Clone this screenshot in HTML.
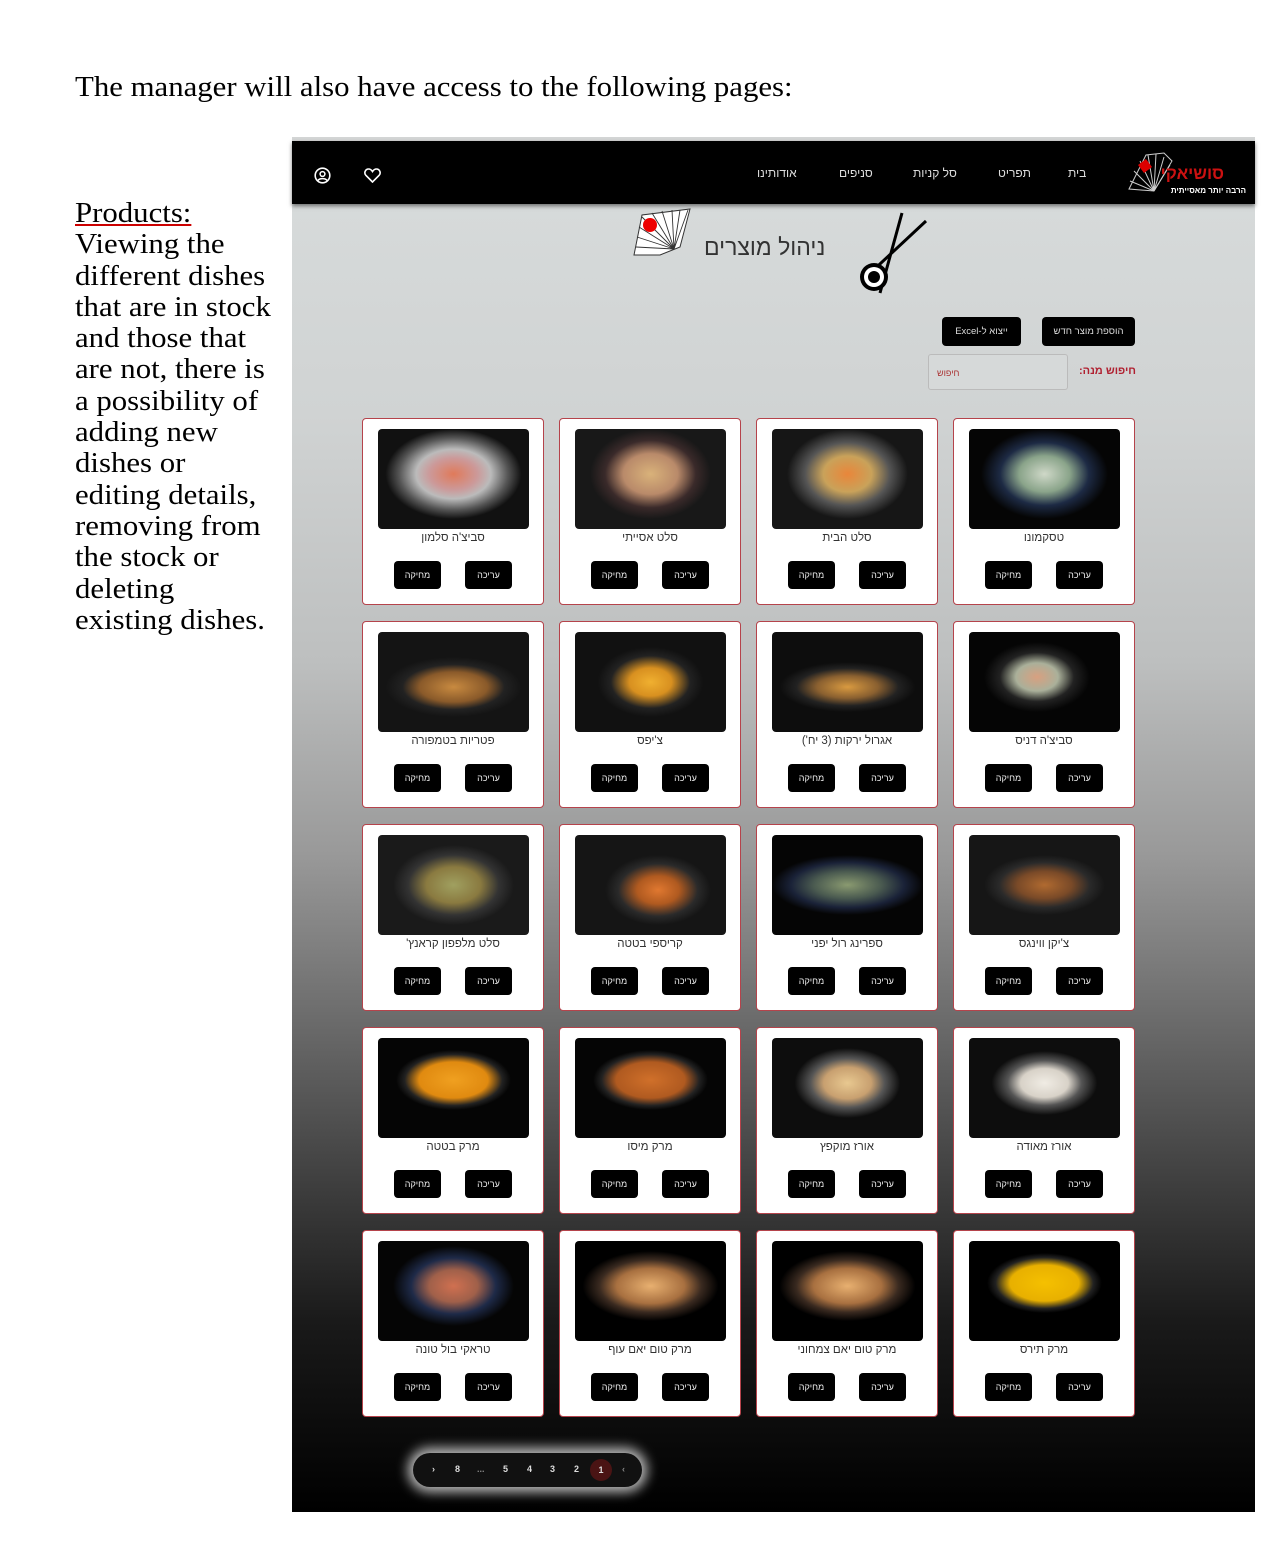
<!DOCTYPE html>
<html><head><meta charset="utf-8">
<style>
*{margin:0;padding:0;box-sizing:border-box}
body{width:1275px;height:1545px;background:#fff;position:relative;overflow:hidden;font-family:"Liberation Serif",serif}
.t{position:absolute;font-family:"Liberation Serif",serif;color:#000;transform:scaleX(1.1);transform-origin:0 0;white-space:nowrap}
#app{position:absolute;left:292px;top:137px;width:963px;height:1375px;background:linear-gradient(#d8dcdc 0%,#d0d3d3 20%,#bdbfbf 38%,#999 52%,#555 70%,#1a1a1a 86%,#000 100%);border-top:4px solid #d4d6d6}
#nav{position:absolute;left:0;top:0;width:963px;height:63px;background:#000;box-shadow:0 2px 4px rgba(0,0,0,.5)}
.nl{position:absolute;top:25px;color:#ddd;font:12px "Liberation Sans","Noto Sans CJK JP",sans-serif}
.card{position:absolute;width:182px;height:187px;background:#fff;border:1.5px solid #b5434b;border-radius:4px;direction:rtl}
.img{position:absolute;left:15px;top:10px;width:151px;height:100px;border-radius:4px;background:#111}
.nm{position:absolute;left:0;width:100%;top:113px;text-align:center;font:11.5px "Liberation Sans","Noto Sans CJK JP",sans-serif;color:#333}
.b{position:absolute;top:142px;width:47px;height:28px;background:#000;border-radius:4px;color:#eee;font:9px "Liberation Sans","Noto Sans CJK JP",sans-serif;text-align:center;line-height:28px}
.b1{left:31px}.b2{left:102px}
.btn{position:absolute;background:#000;border-radius:4px;color:#ddd;font:9.5px "Liberation Sans","Noto Sans CJK JP",sans-serif;text-align:center;line-height:29px;height:29px;direction:rtl}
</style></head><body>
<div class="t" style="left:75px;top:72px;font-size:28px;">The manager will also have access to the following pages:</div>
<div class="t" style="left:75px;top:198px;font-size:28px;line-height:31.3px;"><span style="text-decoration:underline;text-decoration-color:#c00">Products:</span><br>Viewing the<br>different dishes<br>that are in stock<br>and those that<br>are not, there is<br>a possibility of<br>adding new<br>dishes or<br>editing details,<br>removing from<br>the stock or<br>deleting<br>existing dishes.</div>

<div id="app">
<div id="nav">
 <svg style="position:absolute;left:22px;top:26px" width="17" height="17" viewBox="0 0 17 17"><circle cx="8.5" cy="8.5" r="7.3" fill="none" stroke="#fff" stroke-width="1.6"/><circle cx="8.5" cy="7" r="2.4" fill="none" stroke="#fff" stroke-width="1.5"/><path d="M4 13.5c1.5-2.5 7.5-2.5 9 0" fill="none" stroke="#fff" stroke-width="1.5"/></svg>
 <svg style="position:absolute;left:72px;top:27px" width="17" height="15" viewBox="0 0 17 15"><path d="M8.5 14L2 7.5C-.5 4.8 1.5 1 4.6 1 6.5 1 7.7 2.3 8.5 3.5 9.3 2.3 10.5 1 12.4 1 15.5 1 17.5 4.8 15 7.5Z" fill="none" stroke="#fff" stroke-width="1.6"/></svg>
 <span class="nl" style="left:465px">אודותינו</span>
 <span class="nl" style="left:547px">סניפים</span>
 <span class="nl" style="left:621px">סל קניות</span>
 <span class="nl" style="left:706px">תפריט</span>
 <span class="nl" style="left:776px">בית</span>
 <svg style="position:absolute;left:834px;top:10px" width="122" height="48" viewBox="0 0 122 48">
  <g stroke="#ccc" stroke-width="1" fill="none"><path d="M3 38L20 4 38 2 46 10 28 40Z"/><path d="M28 40L8 20M28 40L14 10M28 40L22 4M28 40L30 3M28 40L38 6M28 40L44 14M28 40L4 30"/></g>
  <path d="M12 14l8-6 6 8-8 6z" fill="#d00"/>
  <text x="98" y="28" text-anchor="end" font-family="Liberation Sans,Noto Sans CJK JP,sans-serif" font-size="17" font-weight="bold" fill="#c11">סושיאקי</text>
  <text x="120" y="42" text-anchor="end" font-family="Liberation Sans,Noto Sans CJK JP,sans-serif" font-size="8" font-weight="bold" fill="#fff">הרבה יותר מאסייתית</text>
 </svg>
</div>
<svg style="position:absolute;left:338px;top:66px" width="68" height="56" viewBox="0 0 68 56"><path d="M4 48L12 8 60 2 50 40 30 48Z" fill="#fff" stroke="#333" stroke-width="1"/><g stroke="#333" stroke-width=".9"><path d="M44 42L6 40M44 42L7 30M44 42L9 20M44 42L12 10M44 42L22 6M44 42L32 4M44 42L42 3M44 42L50 3M44 42L58 3"/></g><circle cx="20" cy="18" r="7" fill="#e00"/></svg>
<div style="position:absolute;left:412px;top:93px;font:23px 'Liberation Sans','Noto Sans CJK JP',sans-serif;color:#333;direction:rtl">ניהול מוצרים</div>
<svg style="position:absolute;left:560px;top:70px" width="80" height="84" viewBox="0 0 80 84"><path d="M50 2L28 82M74 10L14 66" stroke="#000" stroke-width="3"/><circle cx="22" cy="66" r="14" fill="#000"/><circle cx="22" cy="66" r="10" fill="#fff"/><circle cx="22" cy="66" r="6" fill="#000"/></svg>

<div class="btn" style="left:650px;top:176px;width:79px">ייצוא ל-Excel</div>
<div class="btn" style="left:750px;top:176px;width:93px">הוספת מוצר חדש</div>
<div style="position:absolute;left:636px;top:213px;width:140px;height:36px;border:1px solid #bbb;border-radius:3px;background:#d6d9d9;font:9px 'Liberation Sans','Noto Sans CJK JP',sans-serif;color:#a33;padding:13px 0 0 8px;text-align:left">חיפוש</div>
<div style="position:absolute;left:780px;top:224px;font:bold 11px 'Liberation Sans','Noto Sans CJK JP',sans-serif;color:#b02030;direction:rtl;width:64px;text-align:right">חיפוש מנה:</div>

<div style="position:absolute;left:121px;top:1312px;width:229px;height:34px;border-radius:17px;background:#111;box-shadow:0 0 12px 5px rgba(255,255,255,.75);font:bold 9px 'Liberation Sans',sans-serif;color:#ddd">
 <span style="position:absolute;left:19px;top:11px">›</span>
 <span style="position:absolute;left:42px;top:11px">8</span>
 <span style="position:absolute;left:64px;top:11px;color:#888">...</span>
 <span style="position:absolute;left:90px;top:11px">5</span>
 <span style="position:absolute;left:114px;top:11px">4</span>
 <span style="position:absolute;left:137px;top:11px">3</span>
 <span style="position:absolute;left:161px;top:11px">2</span>
 <span style="position:absolute;left:177px;top:6px;width:22px;height:22px;border-radius:50%;background:#4a1414;text-align:center;line-height:22px">1</span>
 <span style="position:absolute;left:209px;top:11px;color:#888">‹</span>
</div>
</div>

<div class="card" style="left:362px;top:418px"><div class="img" style="background:radial-gradient(ellipse 45% 45% at 50% 45%,#e07a5a 0,#c99 35%,#bbb 55%,#555 80%,#111 100%)"></div><div class="nm">סביצ'ה סלמון</div><div class="b b1">מחיקה</div><div class="b b2">עריכה</div></div>
<div class="card" style="left:559px;top:418px"><div class="img" style="background:radial-gradient(ellipse 40% 45% at 50% 45%,#d9b27a 0,#b98a6a 45%,#3a2a2a 75%,#181818 100%)"></div><div class="nm">סלט אסייתי</div><div class="b b1">מחיקה</div><div class="b b2">עריכה</div></div>
<div class="card" style="left:756px;top:418px"><div class="img" style="background:radial-gradient(ellipse 40% 45% at 50% 45%,#e9863a 0,#c9a25a 40%,#555 70%,#161616 100%)"></div><div class="nm">סלט הבית</div><div class="b b1">מחיקה</div><div class="b b2">עריכה</div></div>
<div class="card" style="left:953px;top:418px"><div class="img" style="background:radial-gradient(ellipse 42% 45% at 50% 45%,#cfd8c8 0,#8aa48a 40%,#1d2a44 70%,#050505 100%)"></div><div class="nm">טסקמונו</div><div class="b b1">מחיקה</div><div class="b b2">עריכה</div></div>
<div class="card" style="left:362px;top:621px"><div class="img" style="background:radial-gradient(ellipse 45% 30% at 50% 55%,#c88a40 0,#8a5a2a 50%,#222 75%,#141414 100%)"></div><div class="nm">פטריות בטמפורה</div><div class="b b1">מחיקה</div><div class="b b2">עריכה</div></div>
<div class="card" style="left:559px;top:621px"><div class="img" style="background:radial-gradient(ellipse 35% 35% at 50% 50%,#f0b030 0,#d89020 40%,#222 75%,#111 100%)"></div><div class="nm">צ'יפס</div><div class="b b1">מחיקה</div><div class="b b2">עריכה</div></div>
<div class="card" style="left:756px;top:621px"><div class="img" style="background:radial-gradient(ellipse 45% 25% at 50% 55%,#d99a40 0,#8a6030 45%,#222 75%,#0d0d0d 100%)"></div><div class="nm">אגרול ירקות (3 יח')</div><div class="b b1">מחיקה</div><div class="b b2">עריכה</div></div>
<div class="card" style="left:953px;top:621px"><div class="img" style="background:radial-gradient(ellipse 35% 35% at 45% 45%,#d8a080 0,#aab09a 40%,#222 70%,#050505 100%)"></div><div class="nm">סביצ'ה דניס</div><div class="b b1">מחיקה</div><div class="b b2">עריכה</div></div>
<div class="card" style="left:362px;top:824px"><div class="img" style="background:radial-gradient(ellipse 40% 40% at 50% 50%,#a0a060 0,#8a7a40 45%,#333 75%,#1a1a1a 100%)"></div><div class="nm">סלט מלפפון קראנץ'</div><div class="b b1">מחיקה</div><div class="b b2">עריכה</div></div>
<div class="card" style="left:559px;top:824px"><div class="img" style="background:radial-gradient(ellipse 35% 35% at 55% 55%,#e07830 0,#b05a20 40%,#2a2a2a 75%,#151515 100%)"></div><div class="nm">קריספי בטטה</div><div class="b b1">מחיקה</div><div class="b b2">עריכה</div></div>
<div class="card" style="left:756px;top:824px"><div class="img" style="background:radial-gradient(ellipse 50% 30% at 50% 50%,#8a9a70 0,#4a5a50 45%,#1a2238 75%,#050505 100%)"></div><div class="nm">ספרינג רול יפני</div><div class="b b1">מחיקה</div><div class="b b2">עריכה</div></div>
<div class="card" style="left:953px;top:824px"><div class="img" style="background:radial-gradient(ellipse 40% 30% at 50% 50%,#b06a30 0,#7a4a28 45%,#2a2a2a 75%,#161616 100%)"></div><div class="nm">צ'יקן ווינגס</div><div class="b b1">מחיקה</div><div class="b b2">עריכה</div></div>
<div class="card" style="left:362px;top:1027px"><div class="img" style="background:radial-gradient(ellipse 38% 30% at 50% 42%,#f0a020 0,#e08a10 60%,#222 85%,#050505 100%)"></div><div class="nm">מרק בטטה</div><div class="b b1">מחיקה</div><div class="b b2">עריכה</div></div>
<div class="card" style="left:559px;top:1027px"><div class="img" style="background:radial-gradient(ellipse 38% 30% at 50% 42%,#d0702a 0,#b05a20 60%,#222 85%,#050505 100%)"></div><div class="nm">מרק מיסו</div><div class="b b1">מחיקה</div><div class="b b2">עריכה</div></div>
<div class="card" style="left:756px;top:1027px"><div class="img" style="background:radial-gradient(ellipse 35% 35% at 50% 45%,#e8c890 0,#c8a070 45%,#555 70%,#0d0d0d 100%)"></div><div class="nm">אורז מוקפץ</div><div class="b b1">מחיקה</div><div class="b b2">עריכה</div></div>
<div class="card" style="left:953px;top:1027px"><div class="img" style="background:radial-gradient(ellipse 35% 32% at 50% 45%,#f0ece4 0,#d8d2c8 45%,#555 70%,#0d0d0d 100%)"></div><div class="nm">אורז מאודה</div><div class="b b1">מחיקה</div><div class="b b2">עריכה</div></div>
<div class="card" style="left:362px;top:1230px"><div class="img" style="background:radial-gradient(ellipse 40% 40% at 50% 45%,#d07050 0,#a0604a 40%,#1e2a48 70%,#050505 100%)"></div><div class="nm">טראקי בול טונה</div><div class="b b1">מחיקה</div><div class="b b2">עריכה</div></div>
<div class="card" style="left:559px;top:1230px"><div class="img" style="background:radial-gradient(ellipse 45% 35% at 50% 45%,#e8b070 0,#a87040 50%,#3a2a20 75%,#000 100%)"></div><div class="nm">מרק טום יאם עוף</div><div class="b b1">מחיקה</div><div class="b b2">עריכה</div></div>
<div class="card" style="left:756px;top:1230px"><div class="img" style="background:radial-gradient(ellipse 45% 35% at 50% 45%,#e8b070 0,#a87040 50%,#3a2a20 75%,#000 100%)"></div><div class="nm">מרק טום יאם צמחוני</div><div class="b b1">מחיקה</div><div class="b b2">עריכה</div></div>
<div class="card" style="left:953px;top:1230px"><div class="img" style="background:radial-gradient(ellipse 38% 30% at 50% 42%,#f5c000 0,#e8b000 60%,#222 85%,#000 100%)"></div><div class="nm">מרק תירס</div><div class="b b1">מחיקה</div><div class="b b2">עריכה</div></div>
</body></html>
